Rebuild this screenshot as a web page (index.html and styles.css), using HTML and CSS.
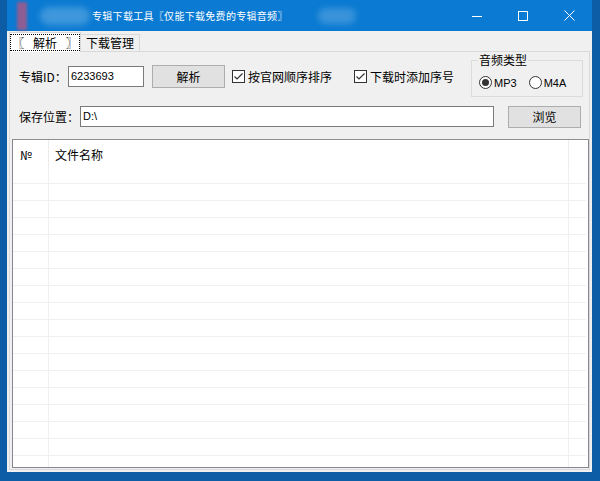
FILE: index.html
```html
<!DOCTYPE html>
<html lang="zh-CN">
<head>
  <meta charset="UTF-8">
  <title>专辑下载工具</title>
  <link rel="stylesheet" href="styles.css">
</head>
<body>

<div class="window">
  <div class="titlebar">
    <span class="blur-icon"></span>
    <span class="blur-name"></span>
    <span class="title">专辑下载工具〖仅能下载免费的专辑音频〗</span>
    <span class="blur-tag"></span>
    <div class="controls">
      <span class="ctl"><svg width="10" height="10"><line x1="0" y1="5.5" x2="10" y2="5.5" stroke="#fff"/></svg></span>
      <span class="ctl"><svg width="10" height="10"><rect x="0.5" y="0.5" width="9" height="9" fill="none" stroke="#fff"/></svg></span>
      <span class="ctl"><svg width="11" height="11"><path d="M0.5 0.5L10.5 10.5M10.5 0.5L0.5 10.5" stroke="#fff"/></svg></span>
    </div>
  </div>

  <div class="client">
    <div class="tabs">
      <div class="tab active"><span class="focus">〖&ensp; 解析 &ensp;〗</span></div>
      <div class="tab">下载管理</div>
    </div>

    <div class="page">
      <div class="row row-top">
        <label class="lbl lbl-id">专辑ID：</label>
        <div class="textbox box-id">6233693</div>
        <div class="btn btn-parse">解析</div>
        <div class="check check-order">
          <svg width="13" height="13"><rect x="0.5" y="0.5" width="12" height="12" fill="#fff" stroke="#333"/><path d="M2.5 6.5L5 9L10.5 3.5" fill="none" stroke="#333" stroke-width="1.2"/></svg>
          <span>按官网顺序排序</span>
        </div>
        <div class="check">
          <svg width="13" height="13"><rect x="0.5" y="0.5" width="12" height="12" fill="#fff" stroke="#333"/><path d="M2.5 6.5L5 9L10.5 3.5" fill="none" stroke="#333" stroke-width="1.2"/></svg>
          <span>下载时添加序号</span>
        </div>
        <fieldset class="group">
          <legend>音频类型</legend>
          <div class="radios">
            <div class="radio">
              <svg width="13" height="13"><circle cx="6.5" cy="6.5" r="6" fill="#fff" stroke="#333"/><circle cx="6.5" cy="6.5" r="3.5" fill="#333"/></svg>
              <span>MP3</span>
            </div>
            <div class="radio">
              <svg width="13" height="13"><circle cx="6.5" cy="6.5" r="6" fill="#fff" stroke="#333"/></svg>
              <span>M4A</span>
            </div>
          </div>
        </fieldset>
      </div>

      <div class="row row-path">
        <label class="lbl lbl-path">保存位置：</label>
        <div class="textbox box-path">D:\</div>
        <div class="btn btn-browse">浏览</div>
      </div>

      <div class="list">
        <div class="list-head">
          <span class="col-no">№</span>
          <span class="col-name">文件名称</span>
        </div>
        <div class="list-body">
          <div class="item"></div><div class="item"></div><div class="item"></div>
          <div class="item"></div><div class="item"></div><div class="item"></div>
          <div class="item"></div><div class="item"></div><div class="item"></div>
          <div class="item"></div><div class="item"></div><div class="item"></div>
          <div class="item"></div><div class="item"></div><div class="item"></div>
          <div class="item"></div><div class="item"></div>
        </div>
      </div>
    </div>
  </div>
</div>

</body>
</html>
```

FILE: styles.css
```css
body {
  margin: 0;
  width: 600px;
  height: 481px;
  overflow: hidden;
  background: #0c5ca6;
  font-family: "Noto Sans CJK SC", sans-serif;
  font-size: 12px;
  color: #000;
}

.window {
  margin-left: 7px;
  width: 585px;
  height: 472px;
  background: #f0f0f0;
  display: flex;
  flex-direction: column;
}

/* title bar */
.titlebar {
  height: 31px;
  flex: none;
  background: #0a7ad2;
  display: flex;
  align-items: center;
  color: #fff;
}

.blur-icon {
  margin-left: 10px;
  width: 10px;
  height: 28px;
  background: #8d5d93;
  filter: blur(1.5px);
}

.blur-name {
  margin-left: 13px;
  width: 50px;
  height: 18px;
  border-radius: 9px;
  background: #3f97dc;
  filter: blur(3px);
}

.title {
  margin-left: 2px;
  font-size: 10px;
  letter-spacing: 0.3px;
  line-height: 14px;
}

.blur-tag {
  margin-left: 30px;
  width: 38px;
  height: 16px;
  border-radius: 8px;
  background: #3a93d9;
  filter: blur(3px);
}

.controls {
  margin-left: auto;
  display: flex;
}

.ctl {
  width: 46px;
  height: 31px;
  display: flex;
  align-items: center;
  justify-content: center;
}

/* tabs */
.client {
  flex: 1;
  display: flex;
  flex-direction: column;
  padding: 1px 2px 2px 2px;
}

.tabs {
  height: 19px;
  display: flex;
  align-items: flex-end;
  position: relative;
  z-index: 1;
}

.tab {
  height: 16px;
  padding: 0 5px;
  line-height: 16px;
  background: #f0f0f0;
  border: 1px solid #d9d9d9;
  border-bottom: none;
  border-left: none;
}

.tab.active {
  width: 72px;
  height: 20px;
  padding: 0;
  background: #fff;
  border-left: 1px solid #d9d9d9;
  box-sizing: border-box;
  display: flex;
  align-items: center;
  justify-content: center;
  margin-bottom: -1px;
}

.focus {
  display: block;
  width: 68px;
  height: 15px;
  line-height: 15px;
  text-align: center;
  white-space: nowrap;
  outline: 1px dotted #000;
}

.page {
  flex: 1;
  display: flex;
  flex-direction: column;
  border: 1px solid #d9d9d9;
  background: #f0f0f0;
}

/* form rows */
.row {
  display: flex;
  align-items: flex-start;
  padding-left: 9px;
}

.row-top {
  height: 45px;
  padding-right: 6px;
}

.row-path {
  margin-top: 9px;
  height: 22px;
}

.lbl {
  line-height: 21px;
  white-space: nowrap;
}

.row-top > .lbl,
.row-top > .textbox,
.row-top > .check {
  margin-top: 14px;
}

.lbl-id {
  width: 49px;
}

.lbl-path {
  width: 61px;
}

.textbox {
  height: 21px;
  box-sizing: border-box;
  border: 1px solid #7a7a7a;
  background: #fff;
  padding-left: 2px;
  font-family: "Liberation Sans", sans-serif;
  font-size: 11px;
  line-height: 19px;
}

.box-id {
  width: 76px;
}

.box-path {
  width: 414px;
}

.btn {
  width: 73px;
  box-sizing: border-box;
  border: 1px solid #adadad;
  background: #e1e1e1;
  text-align: center;
}

.btn-parse {
  margin-left: 8px;
  margin-top: 13px;
  height: 23px;
  line-height: 21px;
}

.btn-browse {
  margin-left: 14px;
  height: 22px;
  line-height: 20px;
}

.check {
  height: 21px;
  display: flex;
  align-items: center;
  white-space: nowrap;
}

.check svg {
  margin-right: 3px;
}

.check-order {
  margin-left: 7px;
  width: 122px;
}

/* group box */
.group {
  margin: 0 0 0 auto;
  padding: 0 0 0 7px;
  width: 112px;
  height: 45px;
  box-sizing: border-box;
  border: 1px solid #dcdcdc;
  min-width: 0;
}

.group legend {
  padding: 0 1px;
  margin-left: -1px;
  line-height: 16px;
}

.radios {
  display: flex;
  margin-top: 8px;
}

.radio {
  display: flex;
  align-items: center;
  height: 13px;
  font-family: "Liberation Sans", sans-serif;
  font-size: 11px;
  margin-right: 12px;
}

.radio svg {
  margin-right: 2px;
}

/* list view */
.list {
  margin: 11px 0 1px 2px;
  flex: 1;
  border: 1px solid #828790;
  border-top-color: #8e8e8e;
  background: #fff;
  display: flex;
  flex-direction: column;
}

.list-head {
  height: 27px;
  flex: none;
  display: flex;
  background:
    linear-gradient(to right, transparent 35px, #ececec 35px, #ececec 36px, transparent 36px),
    linear-gradient(to right, transparent 555px, #ececec 555px, #ececec 556px, transparent 556px);
}

.list-head span {
  padding-top: 5px;
  line-height: 20px;
}

.col-no {
  width: 29px;
  padding-left: 7px;
}

.col-name {
  padding-left: 6px;
}

.list-body {
  flex: 1;
  background:
    linear-gradient(to right, transparent 35px, #f0f0f0 35px, #f0f0f0 36px, transparent 36px),
    linear-gradient(to right, transparent 555px, #f0f0f0 555px, #f0f0f0 556px, transparent 556px);
}

.item {
  height: 16px;
  margin-right: 2px;
  border-bottom: 1px solid #f0f0f0;
}
```
